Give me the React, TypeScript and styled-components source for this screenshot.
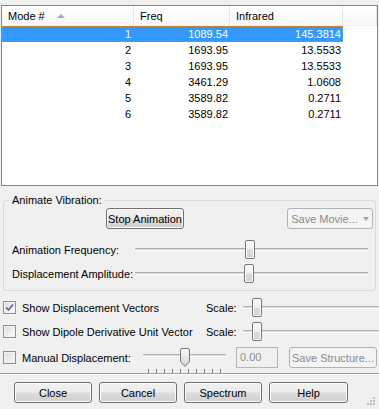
import React from 'react';
import styled, { createGlobalStyle } from 'styled-components';

const GlobalStyle = createGlobalStyle`
  html, body {
    margin: 0;
    padding: 0;
    background: #f0f0f0;
  }
  body {
    font-family: 'Liberation Sans', Arial, sans-serif;
    font-size: 11px;
    color: #000;
  }
`;

const Dialog = styled.div`
  position: relative;
  width: 379px;
  height: 409px;
  overflow: hidden;
  background: #f0f0f0;
  display: flex;
  flex-direction: column;
`;

/* ---------- list view ---------- */

const ListView = styled.div`
  box-sizing: border-box;
  margin: 5px 0 0 1px;
  width: 377px;
  height: 181px;
  border: 1px solid #828790;
  background: #fff;
  display: flex;
  flex-direction: column;
`;

const COLUMNS = '132px 96px 113px 1fr';

const HeaderRow = styled.div`
  display: grid;
  grid-template-columns: ${COLUMNS};
  height: 20px;
  background: linear-gradient(#ffffff, #f7f8fa);
  border-bottom: 1px solid #f0f0f0;
  box-sizing: border-box;
`;

const HeaderCell = styled.div`
  display: flex;
  align-items: center;
  gap: 12px;
  padding-left: 6px;
  border-right: 1px solid #e5e5e5;
  line-height: 20px;
`;

const SortArrow = styled.span`
  width: 0;
  height: 0;
  border-left: 4px solid transparent;
  border-right: 4px solid transparent;
  border-bottom: 4px solid #a8a8a8;
  margin-top: -1px;
`;

const Row = styled.div`
  display: grid;
  grid-template-columns: ${COLUMNS};
  height: 16px;
  line-height: 16px;
`;

const Cell = styled.div<{ $selected?: boolean; $pr: number }>`
  text-align: right;
  padding-right: ${(p) => p.$pr}px;
  color: ${(p) => (p.$selected ? '#fff' : '#000')};
`;

const SelectedBand = styled.div`
  grid-column: 1 / 4;
  display: grid;
  grid-template-columns: 132px 96px 113px;
  background: #3399ff;
  outline: 1px dotted #d08a3c;
  outline-offset: -1px;
`;

/* ---------- group box ---------- */

const GroupBox = styled.div`
  position: relative;
  box-sizing: border-box;
  margin: 14px 0 0 3px;
  width: 373px;
  height: 91px;
  border: 1px solid #d5dadd;
  border-radius: 3px;
  padding: 7px 7px 0 8px;
  display: flex;
  flex-direction: column;
`;

const GroupLabel = styled.span`
  position: absolute;
  top: -7px;
  left: 5px;
  padding: 0 3px;
  line-height: 13px;
  background: #f0f0f0;
`;

const ButtonRow = styled.div`
  display: flex;
  justify-content: space-between;
  padding-left: 94px;
  margin-right: -5px;
  height: 21px;
`;

const SliderRow = styled.div<{ $top: number }>`
  display: grid;
  grid-template-columns: 123px 233px;
  align-items: center;
  height: 19px;
  margin-top: ${(p) => p.$top}px;
`;

/* ---------- sliders ---------- */

const SliderBox = styled.div<{ $w: number; $ml?: number }>`
  position: relative;
  flex: none;
  width: ${(p) => p.$w}px;
  height: 19px;
  margin-left: ${(p) => p.$ml ?? 0}px;
`;

const Track = styled.div<{ $top: number }>`
  position: absolute;
  left: 0;
  right: 0;
  top: ${(p) => p.$top}px;
  height: 1px;
  border-top: 1px solid #b0b0b0;
  border-bottom: 1px solid #fcfcfc;
  background: #dcdcdc;
`;

const Thumb = styled.div<{ $x: number }>`
  position: absolute;
  left: ${(p) => p.$x}px;
  top: 0;
  box-sizing: border-box;
  width: 10px;
  height: 19px;
  border: 1px solid #767676;
  border-radius: 2px;
  background: linear-gradient(#fbfbfb 0%, #f0f0f0 45%, #dcdcdc 55%, #d2d2d2 100%);
  box-shadow: inset 0 0 0 1px #fdfdfd;
`;

const PointerThumb = styled.svg<{ $x: number }>`
  position: absolute;
  left: ${(p) => p.$x}px;
  top: 0;
`;

const Ticks = styled.div`
  position: absolute;
  left: 5px;
  top: 21px;
  display: flex;
  gap: 7px;
`;

const Tick = styled.span`
  width: 1px;
  height: 4px;
  background: #7d7d7d;
`;

const Slider = ({ width, thumb }: { width: number; thumb: number }) => (
  <SliderBox $w={width}>
    <Track $top={8} />
    <Thumb $x={thumb} />
  </SliderBox>
);

/* ---------- buttons ---------- */

const Button = styled.button<{ $w: number }>`
  box-sizing: border-box;
  width: ${(p) => p.$w}px;
  height: 21px;
  padding: 0;
  font: inherit;
  color: #000;
  border: 1px solid #707070;
  border-radius: 3px;
  background: linear-gradient(#f2f2f2 0%, #ebebeb 49%, #dddddd 51%, #cfcfcf 100%);
  box-shadow: inset 0 0 0 1px #fbfbfb;
`;

const DisabledButton = styled.div<{ $w: number; $ml?: number }>`
  box-sizing: border-box;
  flex: none;
  width: ${(p) => p.$w}px;
  height: 21px;
  margin-left: ${(p) => p.$ml ?? 0}px;
  border: 1px solid #adb2b5;
  border-radius: 3px;
  background: #f4f4f4;
  color: #8a8a8a;
  display: flex;
  align-items: center;
  justify-content: center;
  gap: 5px;
`;

const DropArrow = styled.span`
  width: 0;
  height: 0;
  border-left: 3px solid transparent;
  border-right: 3px solid transparent;
  border-top: 4px solid #a0a0a0;
  margin-top: 1px;
`;

const TextBox = styled.div`
  box-sizing: border-box;
  flex: none;
  width: 42px;
  height: 21px;
  margin-left: 10px;
  border: 1px solid #b4b4b4;
  background: #f0f0f0;
  color: #8d8d8d;
  padding-left: 3px;
  line-height: 19px;
`;

/* ---------- option rows ---------- */

const Options = styled.div`
  margin-top: 7px;
  padding-left: 3px;
  display: flex;
  flex-direction: column;
`;

const OptionRow = styled.div<{ $top: number; $h: number }>`
  display: flex;
  align-items: center;
  height: ${(p) => p.$h}px;
  margin-top: ${(p) => p.$top}px;
`;

const Box = styled.span`
  box-sizing: border-box;
  flex: none;
  width: 13px;
  height: 13px;
  border: 1px solid #8e8f8f;
  background: linear-gradient(135deg, #dcdcdc, #fbfbfb);
  box-shadow: inset 0 0 0 1px #f4f4f4;
  display: flex;
  align-items: center;
  justify-content: center;
`;

const OptionLabel = styled.span<{ $w: number }>`
  flex: none;
  width: ${(p) => p.$w}px;
  margin-left: 6px;
  white-space: nowrap;
`;

const ScaleLabel = styled.span`
  flex: none;
  width: 37px;
`;

const CheckBox = ({ checked }: { checked?: boolean }) => (
  <Box>
    {checked && (
      <svg width="9" height="9" viewBox="0 0 9 9">
        <path d="M1 4.5 L3.5 7 L8 1.5" fill="none" stroke="#4a5a94" strokeWidth="1.5" />
      </svg>
    )}
  </Box>
);

/* ---------- footer ---------- */

const Separator = styled.div`
  margin-top: 5px;
  height: 0;
  border-top: 1px solid #a0a0a0;
  border-bottom: 1px solid #ffffff;
`;

const Footer = styled.div`
  display: flex;
  gap: 7px;
  padding: 7px 0 0 14px;
`;

const Grip = styled.svg`
  position: absolute;
  right: 4px;
  bottom: 4px;
`;

const modes = [
  ['1', '1089.54', '145.3814'],
  ['2', '1693.95', '13.5533'],
  ['3', '1693.95', '13.5533'],
  ['4', '3461.29', '1.0608'],
  ['5', '3589.82', '0.2711'],
  ['6', '3589.82', '0.2711'],
];

const gripDots = [
  [6, 0],
  [3, 3],
  [6, 3],
  [0, 6],
  [3, 6],
  [6, 6],
];

const App: React.FC = () => (
  <>
    <GlobalStyle />
    <Dialog>
      <ListView>
        <HeaderRow>
          <HeaderCell>
            Mode # <SortArrow />
          </HeaderCell>
          <HeaderCell>Freq</HeaderCell>
          <HeaderCell>Infrared</HeaderCell>
          <HeaderCell />
        </HeaderRow>
        {modes.map(([mode, freq, ir], i) =>
          i === 0 ? (
            <Row key={mode}>
              <SelectedBand>
                <Cell $selected $pr={3}>{mode}</Cell>
                <Cell $selected $pr={2}>{freq}</Cell>
                <Cell $selected $pr={2}>{ir}</Cell>
              </SelectedBand>
            </Row>
          ) : (
            <Row key={mode}>
              <Cell $pr={3}>{mode}</Cell>
              <Cell $pr={2}>{freq}</Cell>
              <Cell $pr={2}>{ir}</Cell>
            </Row>
          )
        )}
      </ListView>

      <GroupBox>
        <GroupLabel>Animate Vibration:</GroupLabel>
        <ButtonRow>
          <Button $w={78}>Stop Animation</Button>
          <DisabledButton $w={86}>
            Save Movie... <DropArrow />
          </DisabledButton>
        </ButtonRow>
        <SliderRow $top={11}>
          <span>Animation Frequency:</span>
          <Slider width={233} thumb={110} />
        </SliderRow>
        <SliderRow $top={5}>
          <span>Displacement Amplitude:</span>
          <Slider width={233} thumb={109} />
        </SliderRow>
      </GroupBox>

      <Options>
        <OptionRow $top={0} $h={19}>
          <CheckBox checked />
          <OptionLabel $w={184}>Show Displacement Vectors</OptionLabel>
          <ScaleLabel>Scale:</ScaleLabel>
          <Slider width={140} thumb={9} />
        </OptionRow>
        <OptionRow $top={5} $h={19}>
          <CheckBox />
          <OptionLabel $w={184}>Show Dipole Derivative Unit Vector</OptionLabel>
          <ScaleLabel>Scale:</ScaleLabel>
          <Slider width={140} thumb={9} />
        </OptionRow>
        <OptionRow $top={6} $h={21}>
          <CheckBox />
          <OptionLabel $w={121}>Manual Displacement:</OptionLabel>
          <SliderBox $w={83}>
            <Track $top={6} />
            <PointerThumb $x={37} width="10" height="19" viewBox="0 0 10 19">
              <defs>
                <linearGradient id="pt" x1="0" y1="0" x2="0" y2="1">
                  <stop offset="0" stopColor="#fbfbfb" />
                  <stop offset="1" stopColor="#d4d4d4" />
                </linearGradient>
              </defs>
              <path
                d="M0.5 2 Q0.5 0.5 2 0.5 L8 0.5 Q9.5 0.5 9.5 2 L9.5 13.5 L5 18.5 L0.5 13.5 Z"
                fill="url(#pt)"
                stroke="#767676"
              />
            </PointerThumb>
            <Ticks>
              {Array.from({ length: 10 }).map((_, i) => (
                <Tick key={i} />
              ))}
            </Ticks>
          </SliderBox>
          <TextBox>0.00</TextBox>
          <DisabledButton $w={88} $ml={11}>
            Save Structure...
          </DisabledButton>
        </OptionRow>
      </Options>

      <Separator />

      <Footer>
        <Button $w={78}>Close</Button>
        <Button $w={78}>Cancel</Button>
        <Button $w={78}>Spectrum</Button>
        <Button $w={79}>Help</Button>
      </Footer>

      <Grip width="8" height="8" viewBox="0 0 8 8">
        {gripDots.map(([x, y]) => (
          <rect key={`${x}-${y}`} x={x} y={y} width="2" height="2" fill="#bdbdbd" />
        ))}
      </Grip>
    </Dialog>
  </>
);

export default App;
